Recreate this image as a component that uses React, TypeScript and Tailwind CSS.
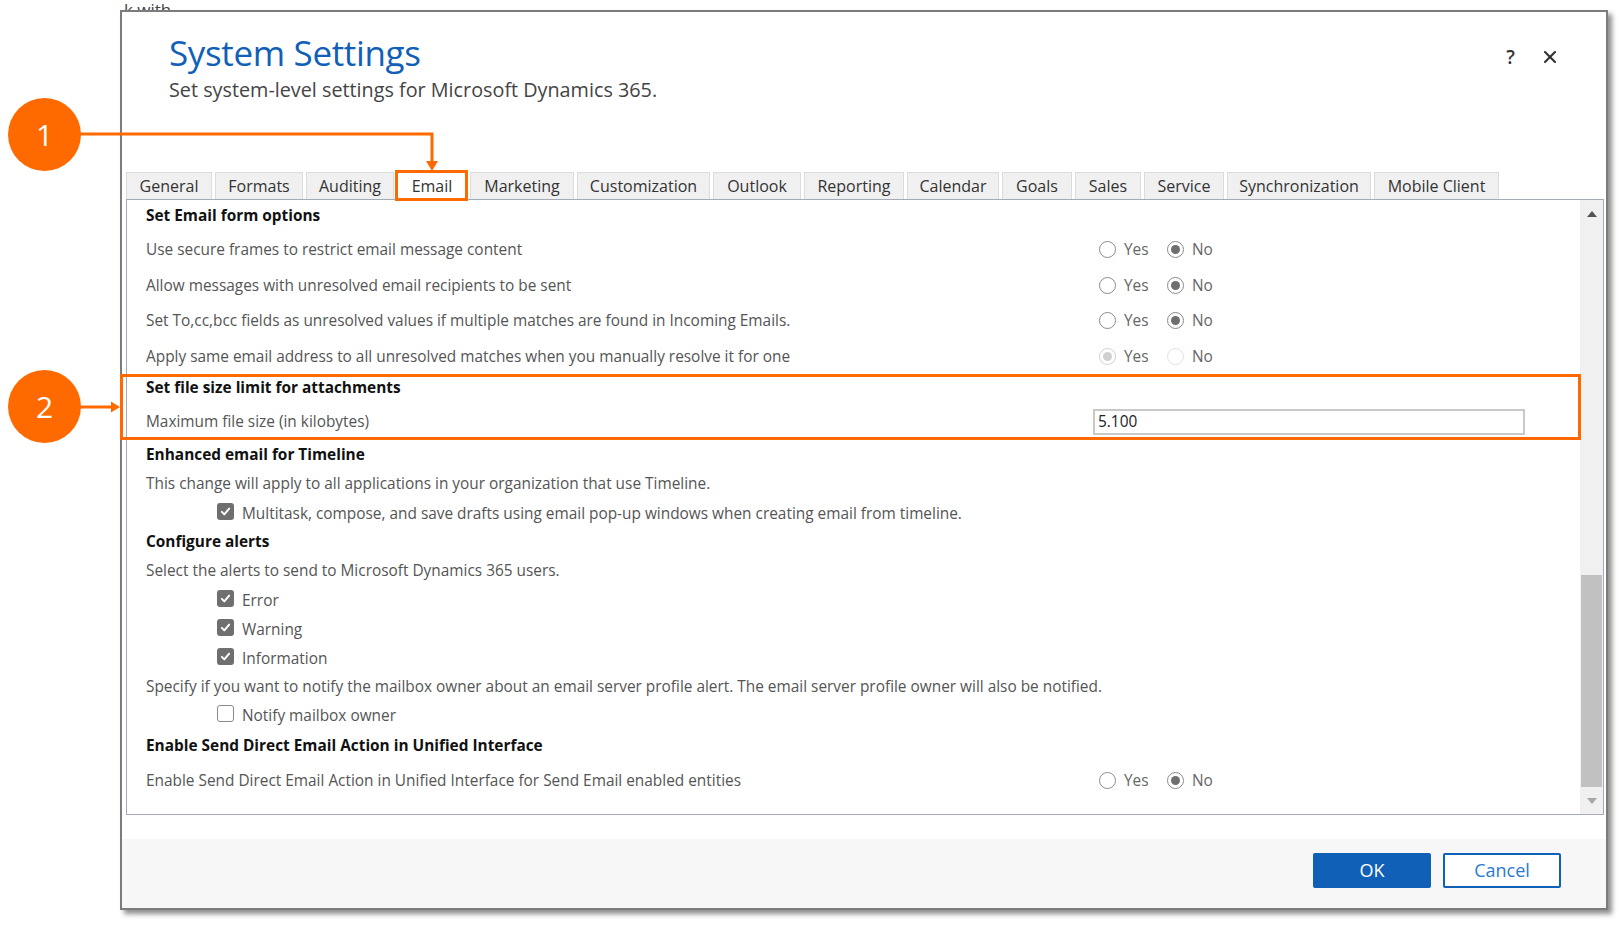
import { X } from "lucide-react";

const tabs: [string, number][] = [
  ["General", 86],
  ["Formats", 88],
  ["Auditing", 88],
  ["Email", 70],
  ["Marketing", 104],
  ["Customization", 133],
  ["Outlook", 88],
  ["Reporting", 100],
  ["Calendar", 92],
  ["Goals", 70],
  ["Sales", 66],
  ["Service", 80],
  ["Synchronization", 144],
  ["Mobile Client", 125],
];

const Radio = ({ checked = false, disabled = false }: { checked?: boolean; disabled?: boolean }) => (
  <span
    className={`flex items-center justify-center w-[17px] h-[17px] rounded-full border bg-white ${
      disabled ? (checked ? "border-[#cfcfcf]" : "border-[#e2e2e2]") : "border-[#8a8a8a]"
    }`}
  >
    {checked && (
      <span className={`w-[9px] h-[9px] rounded-full ${disabled ? "bg-[#d0d0d0]" : "bg-[#6f6f6f]"}`} />
    )}
  </span>
);

const YesNo = ({ yes = false, disabled = false }: { yes?: boolean; disabled?: boolean }) => (
  <div className="flex items-center ml-[6px] text-[#666]">
    <div className="flex items-center gap-[8px] w-[68px]">
      <Radio checked={yes} disabled={disabled} />
      <span>Yes</span>
    </div>
    <div className="flex items-center gap-[8px]">
      <Radio checked={!yes} disabled={disabled} />
      <span>No</span>
    </div>
  </div>
);

const Heading = ({ text, h }: { text: string; h: string }) => (
  <div className={`flex items-center ${h} font-bold text-[#111]`}>{text}</div>
);

const Row = ({ text, h, children }: { text: string; h: string; children?: React.ReactNode }) => (
  <div className={`flex items-center ${h}`}>
    <div className="w-[947px] shrink-0 whitespace-nowrap text-[#555]">{text}</div>
    {children}
  </div>
);

const Check = ({ label, checked = true, h }: { label: string; checked?: boolean; h: string }) => (
  <div className={`flex items-center ${h} pl-[71px]`}>
    <span
      className={`flex items-center justify-center w-[17px] h-[17px] rounded-[3px] -mt-[5px] ${
        checked ? "bg-[#6f6f6f]" : "border border-[#8a8a8a] bg-white"
      }`}
    >
      {checked && (
        <svg width="13" height="13" viewBox="0 0 16 16" fill="none">
          <path d="M3.5 8.5l3 3 6-7" stroke="white" strokeWidth="2.4" strokeLinecap="round" strokeLinejoin="round" />
        </svg>
      )}
    </span>
    <span className="ml-[8px] text-[#555]">{label}</span>
  </div>
);

export default function App() {
  return (
    <div className="relative w-[1620px] h-[926px] overflow-hidden bg-white font-['Open_Sans','Noto_Sans',sans-serif] text-[15.4px]">
      {/* page behind the dialog */}
      <div className="absolute left-[124px] top-0 text-[17px] leading-[20px] text-[#444]">k with</div>

      <div className="relative z-10 ml-[120px] mt-[10px] w-[1488px] h-[900px] border-2 border-[#7c7c7c] bg-white shadow-[4px_4px_5px_rgba(0,0,0,0.45)] flex flex-col">
        {/* header */}
        <div className="h-[160px] shrink-0 flex justify-between pl-[47px] pr-[46px] pt-[19px]">
          <div>
            <h1 className="text-[35px] leading-[44px] tracking-[-0.01em] text-[#1160b7]">System Settings</h1>
            <p className="mt-[2px] text-[19.8px] leading-[26px] text-[#444]">
              Set system-level settings for Microsoft Dynamics 365.
            </p>
          </div>
          <div className="mt-[14px] h-[24px] flex items-center gap-[25px] text-[#333]">
            <span className="text-[19px] font-semibold">?</span>
            <X size={20} strokeWidth={2.6} />
          </div>
        </div>

        {/* tabs */}
        <div className="ml-[4px] flex gap-[3px] h-[27px] shrink-0">
          {tabs.map(([name, w]) => (
            <div
              key={name}
              style={{ width: w }}
              className={`flex items-center justify-center border border-b-0 border-[#dcdcdc] text-[16px] text-[#333] ${
                name === "Email" ? "bg-white" : "bg-[#f0f0f0]"
              }`}
            >
              {name}
            </div>
          ))}
        </div>

        {/* content panel */}
        <div className="ml-[4px] w-[1478px] h-[616px] shrink-0 border border-[#a3acb6] flex">
          <div className="flex-1 pl-[19px]">
            <Heading text="Set Email form options" h="h-[32px]" />
            <Row text="Use secure frames to restrict email message content" h="h-[35.5px]">
              <YesNo />
            </Row>
            <Row text="Allow messages with unresolved email recipients to be sent" h="h-[35.5px]">
              <YesNo />
            </Row>
            <Row text="Set To,cc,bcc fields as unresolved values if multiple matches are found in Incoming Emails." h="h-[35.5px]">
              <YesNo />
            </Row>
            <Row text="Apply same email address to all unresolved matches when you manually resolve it for one" h="h-[35.5px]">
              <YesNo yes disabled />
            </Row>
            <Heading text="Set file size limit for attachments" h="h-[27px]" />
            <Row text="Maximum file size (in kilobytes)" h="h-[41px]">
              <div className="w-[432px] h-[26px] border-2 border-[#c9c9c9] flex items-center pl-[3px] text-[#222]">
                5.100
              </div>
            </Row>
            <Heading text="Enhanced email for Timeline" h="h-[25px]" />
            <Row text="This change will apply to all applications in your organization that use Timeline." h="h-[34px]" />
            <Check label="Multitask, compose, and save drafts using email pop-up windows when creating email from timeline." h="h-[26px]" />
            <Heading text="Configure alerts" h="h-[29px]" />
            <Row text="Select the alerts to send to Microsoft Dynamics 365 users." h="h-[30px]" />
            <Check label="Error" h="h-[29px]" />
            <Check label="Warning" h="h-[29px]" />
            <Check label="Information" h="h-[29px]" />
            <Row
              text="Specify if you want to notify the mailbox owner about an email server profile alert. The email server profile owner will also be notified."
              h="h-[28px]"
            />
            <Check label="Notify mailbox owner" checked={false} h="h-[29px]" />
            <Heading text="Enable Send Direct Email Action in Unified Interface" h="h-[32px]" />
            <Row text="Enable Send Direct Email Action in Unified Interface for Send Email enabled entities" h="h-[38px]">
              <YesNo />
            </Row>
          </div>

          {/* scrollbar */}
          <div className="w-[23px] bg-[#f0f0f0] flex flex-col">
            <div className="h-[28px] flex items-center justify-center">
              <span className="w-0 h-0 border-x-[5px] border-x-transparent border-b-[6px] border-b-[#555]" />
            </div>
            <div className="flex-1" />
            <div className="h-[212px] mx-[1px] bg-[#c1c1c1]" />
            <div className="h-[27px] flex items-center justify-center">
              <span className="w-0 h-0 border-x-[5px] border-x-transparent border-t-[6px] border-t-[#a6a6a6]" />
            </div>
          </div>
        </div>

        {/* footer */}
        <div className="mt-[24px] flex-1 bg-[#f7f7f7] flex justify-end items-start gap-[12px] pt-[14px] pr-[45px]">
          <button className="w-[118px] h-[35px] rounded-[2px] bg-[#1160b7] text-white text-[18px]">OK</button>
          <button className="w-[118px] h-[35px] rounded-[2px] border-2 border-[#1160b7] bg-white text-[#2a7ad0] text-[18px]">
            Cancel
          </button>
        </div>
      </div>

      {/* callouts */}
      <svg className="absolute left-0 top-0 z-20 pointer-events-none" width="1620" height="926">
        <g stroke="#ff6a00" strokeWidth="3" fill="none">
          <rect x="396.5" y="171.5" width="70" height="28" />
          <path d="M80 134 H432 V162" />
          <rect x="121.5" y="375.5" width="1458" height="63" />
          <path d="M80 407 H112" />
        </g>
        <polygon points="426,161 438,161 432,171" fill="#ff6a00" />
        <polygon points="111,401.5 111,412.5 120,407" fill="#ff6a00" />
      </svg>
      <div className="absolute z-20 left-[8px] top-[98px] w-[73px] h-[73px] rounded-full bg-[#ff6a00] flex items-center justify-center text-white text-[30px]">
        1
      </div>
      <div className="absolute z-20 left-[8px] top-[370px] w-[73px] h-[73px] rounded-full bg-[#ff6a00] flex items-center justify-center text-white text-[30px]">
        2
      </div>
    </div>
  );
}
